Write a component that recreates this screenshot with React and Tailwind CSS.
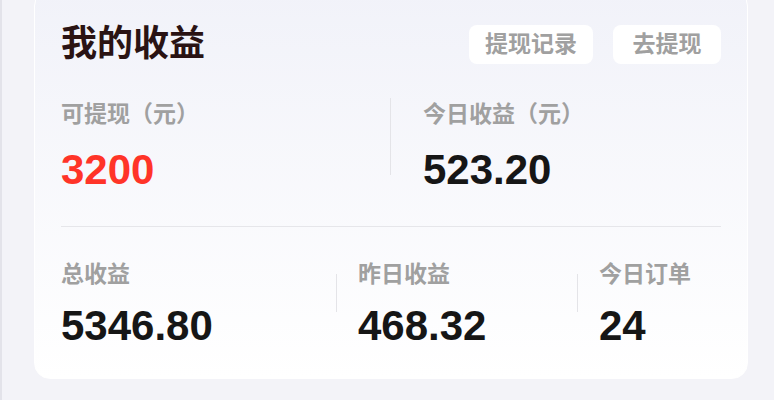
import React from "react";

const font = { fontFamily: "'Liberation Sans', 'Noto Sans CJK SC', sans-serif" };

const Label = ({ children }) => (
  <div className="text-[23px] leading-[28px] font-bold text-[#a0a0a0]">{children}</div>
);

const Value = ({ children, red }) => (
  <div className={`text-[42px] leading-[42px] font-bold ${red ? "text-[#ff3428]" : "text-[#161616]"}`}>
    {children}
  </div>
);

export default function App() {
  const bottom = [
    { label: "总收益", value: "5346.80", w: "w-[275px]" },
    { label: "昨日收益", value: "468.32", w: "w-[241px]" },
    { label: "今日订单", value: "24", w: "flex-1" },
  ];

  return (
    <div className="w-[774px] h-[400px] overflow-hidden bg-[#f3f3f8] flex" style={font}>
      <div className="w-[2px] bg-[#e3e3ea]" />
      <div className="flex-1 pl-[32px] pr-[26px]">
        <div className="-mt-[10px] rounded-[16px] border-[1.5px] border-white bg-linear-to-b from-[#f1f2f9] to-white px-[26px] pt-[33px] pb-[31px]">
          {/* header */}
          <div className="flex items-center justify-between h-[40px]">
            <h2 className="text-[36px] leading-[40px] font-bold text-[#2a1313]">我的收益</h2>
            <div className="flex gap-[20px]">
              <button className="w-[124px] h-[39px] rounded-[8px] bg-white text-[23px] font-bold text-[#a0a0a0]">
                提现记录
              </button>
              <button className="w-[108px] h-[39px] rounded-[8px] bg-white text-[23px] font-bold text-[#a0a0a0]">
                去提现
              </button>
            </div>
          </div>

          {/* withdrawable / today */}
          <div className="flex mt-[34px] pb-[35px] border-b border-[#e6e6ea]">
            <div className="w-[329px] pt-[2px]">
              <Label>可提现（元）</Label>
              <div className="mt-[21px]">
                <Value red>3200</Value>
              </div>
            </div>
            <div className="flex-1 flex">
              <div className="w-px h-[77px] bg-[#e4e4e8]" />
              <div className="pl-[32px] pt-[2px]">
                <Label>今日收益（元）</Label>
                <div className="mt-[21px]">
                  <Value>523.20</Value>
                </div>
              </div>
            </div>
          </div>

          {/* totals */}
          <div className="flex pt-[33px]">
            {bottom.map((item, i) => (
              <div key={item.label} className={`${item.w} flex`}>
                {i > 0 && <div className="w-px h-[38px] mt-[14px] bg-[#e4e4e8]" />}
                <div className={i > 0 ? "pl-[21px]" : ""}>
                  <Label>{item.label}</Label>
                  <div className="mt-[17px]">
                    <Value>{item.value}</Value>
                  </div>
                </div>
              </div>
            ))}
          </div>
        </div>
      </div>
    </div>
  );
}
